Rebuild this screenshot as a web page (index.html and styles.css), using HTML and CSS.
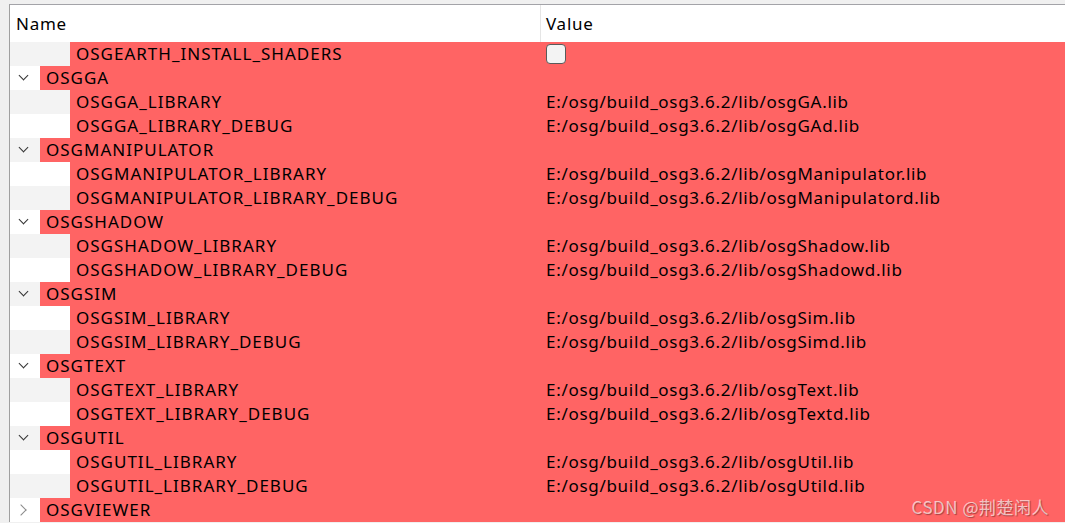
FILE: index.html
```html
<!DOCTYPE html>
<html lang="en">
<head>
    <meta charset="UTF-8">
    <title>CMake cache</title>
    <link rel="stylesheet" href="styles.css">
</head>
<body>
    <div class="tree">
        <div class="header">
            <div class="head-cell">Name</div>
            <div class="head-cell head-value">Value</div>
        </div>

        <div class="row alt child">
            <span class="twisty"></span><span class="indent"></span>
            <span class="name">OSGEARTH_INSTALL_SHADERS</span>
            <span class="value"><span class="checkbox"></span></span>
        </div>

        <div class="row group">
            <span class="twisty open"></span>
            <span class="name">OSGGA</span><span class="value"></span>
        </div>
        <div class="row alt child">
            <span class="twisty"></span><span class="indent"></span>
            <span class="name">OSGGA_LIBRARY</span>
            <span class="value">E:/osg/build_osg3.6.2/lib/osgGA.lib</span>
        </div>
        <div class="row child">
            <span class="twisty"></span><span class="indent"></span>
            <span class="name">OSGGA_LIBRARY_DEBUG</span>
            <span class="value">E:/osg/build_osg3.6.2/lib/osgGAd.lib</span>
        </div>

        <div class="row alt group">
            <span class="twisty open"></span>
            <span class="name">OSGMANIPULATOR</span><span class="value"></span>
        </div>
        <div class="row child">
            <span class="twisty"></span><span class="indent"></span>
            <span class="name">OSGMANIPULATOR_LIBRARY</span>
            <span class="value">E:/osg/build_osg3.6.2/lib/osgManipulator.lib</span>
        </div>
        <div class="row alt child">
            <span class="twisty"></span><span class="indent"></span>
            <span class="name">OSGMANIPULATOR_LIBRARY_DEBUG</span>
            <span class="value">E:/osg/build_osg3.6.2/lib/osgManipulatord.lib</span>
        </div>

        <div class="row group">
            <span class="twisty open"></span>
            <span class="name">OSGSHADOW</span><span class="value"></span>
        </div>
        <div class="row alt child">
            <span class="twisty"></span><span class="indent"></span>
            <span class="name">OSGSHADOW_LIBRARY</span>
            <span class="value">E:/osg/build_osg3.6.2/lib/osgShadow.lib</span>
        </div>
        <div class="row child">
            <span class="twisty"></span><span class="indent"></span>
            <span class="name">OSGSHADOW_LIBRARY_DEBUG</span>
            <span class="value">E:/osg/build_osg3.6.2/lib/osgShadowd.lib</span>
        </div>

        <div class="row alt group">
            <span class="twisty open"></span>
            <span class="name">OSGSIM</span><span class="value"></span>
        </div>
        <div class="row child">
            <span class="twisty"></span><span class="indent"></span>
            <span class="name">OSGSIM_LIBRARY</span>
            <span class="value">E:/osg/build_osg3.6.2/lib/osgSim.lib</span>
        </div>
        <div class="row alt child">
            <span class="twisty"></span><span class="indent"></span>
            <span class="name">OSGSIM_LIBRARY_DEBUG</span>
            <span class="value">E:/osg/build_osg3.6.2/lib/osgSimd.lib</span>
        </div>

        <div class="row group">
            <span class="twisty open"></span>
            <span class="name">OSGTEXT</span><span class="value"></span>
        </div>
        <div class="row alt child">
            <span class="twisty"></span><span class="indent"></span>
            <span class="name">OSGTEXT_LIBRARY</span>
            <span class="value">E:/osg/build_osg3.6.2/lib/osgText.lib</span>
        </div>
        <div class="row child">
            <span class="twisty"></span><span class="indent"></span>
            <span class="name">OSGTEXT_LIBRARY_DEBUG</span>
            <span class="value">E:/osg/build_osg3.6.2/lib/osgTextd.lib</span>
        </div>

        <div class="row alt group">
            <span class="twisty open"></span>
            <span class="name">OSGUTIL</span><span class="value"></span>
        </div>
        <div class="row child">
            <span class="twisty"></span><span class="indent"></span>
            <span class="name">OSGUTIL_LIBRARY</span>
            <span class="value">E:/osg/build_osg3.6.2/lib/osgUtil.lib</span>
        </div>
        <div class="row alt child">
            <span class="twisty"></span><span class="indent"></span>
            <span class="name">OSGUTIL_LIBRARY_DEBUG</span>
            <span class="value">E:/osg/build_osg3.6.2/lib/osgUtild.lib</span>
        </div>

        <div class="row group">
            <span class="twisty closed"></span>
            <span class="name">OSGVIEWER</span><span class="value"></span>
        </div>

        <div class="watermark">CSDN @荆楚闲人</div>
    </div>
</body>
</html>
```

FILE: styles.css
```css
body {
    margin: 0;
    background: #f0f0f0;
    font-family: "Noto Sans", "Noto Sans CJK SC", sans-serif;
    font-size: 17px;
    letter-spacing: 0.75px;
    color: #000;
    overflow: hidden;
}
.tree {
    position: relative;
    margin: 4px 0 0 9px;
    border-top: 1px solid #a3a3a8;
    border-left: 1px solid #a0a0a0;
    background: #fff;
}
.header {
    display: grid;
    grid-template-columns: 530px 1fr;
    height: 37px;
    background: #fff;
}
.head-cell {
    line-height: 38px;
    padding-left: 6px;
}
.head-value {
    border-left: 1px solid #e5e5e5;
    padding-left: 5px;
}
.row {
    display: grid;
    grid-template-columns: 30px 30px 470px 1fr;
    height: 24px;
    line-height: 24px;
    background: #fff;
    white-space: nowrap;
}
.row.alt { background: #f3f3f3; }
.name, .value {
    background: #ff6464;
}
.name {
    padding-left: 6px;
    letter-spacing: 1px;
}
.value {
    padding-left: 6px;
    letter-spacing: 0.7px;
    display: flex;
    align-items: center;
}
.group .name { grid-column: 2 / 4; }
.twisty {
    position: relative;
}
.twisty.open::before {
    content: "";
    position: absolute;
    left: 10px;
    top: 6px;
    width: 6px;
    height: 6px;
    border-right: 1.5px solid #333;
    border-bottom: 1.5px solid #333;
    transform: rotate(45deg);
}
.twisty.closed::before {
    content: "";
    position: absolute;
    left: 7px;
    top: 8px;
    width: 7px;
    height: 7px;
    border-right: 1.5px solid #8a8a8a;
    border-bottom: 1.5px solid #8a8a8a;
    transform: rotate(-45deg);
}
.checkbox {
    display: block;
    width: 18px;
    height: 18px;
    border: 1px solid #5a5a5a;
    border-radius: 4px;
    background: #f3f3f3;
}
.watermark {
    position: absolute;
    right: 16px;
    bottom: 4px;
    font-family: "Noto Sans CJK SC", sans-serif;
    font-size: 17px;
    letter-spacing: 0.5px;
    line-height: 22px;
    color: rgba(255, 255, 255, 0.65);
    text-shadow: 1px 1px 1px rgba(0, 0, 0, 0.35);
}
```
